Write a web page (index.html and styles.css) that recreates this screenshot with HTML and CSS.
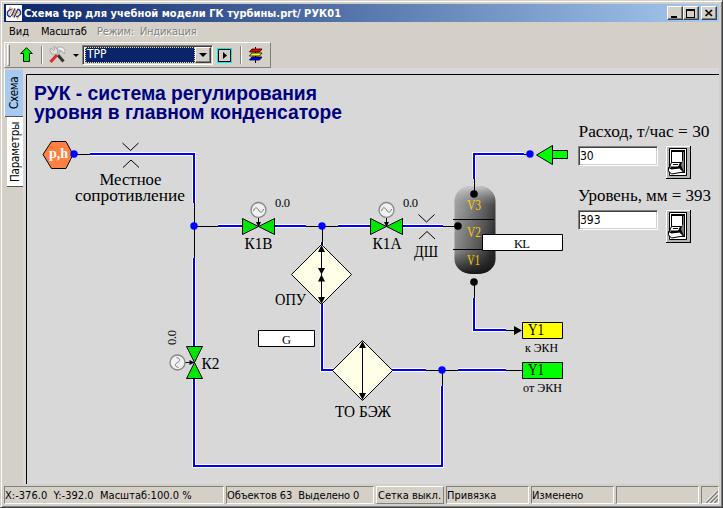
FILE: index.html
```html
<!DOCTYPE html>
<html lang="ru">
<head>
<meta charset="utf-8">
<title>Схема tpp для учебной модели ГК турбины</title>
<link rel="stylesheet" href="styles.css">
</head>
<body>
<div class="window">
  <header class="titlebar">
    <svg class="app-icon" width="16" height="16" viewBox="0 0 16 16"><path fill="#fff" d="M0 0h16v16H0z"/><g fill="none" stroke-width="1.500"><path d="M6 4.500H4L1.500 7v3L3 11.500h2M10 11.500h2L14.500 9V6.500L13 4.500h-2" stroke="#2a3a86"/><path d="M5.500 11 9 3.500M8 12.500 11.500 5" stroke="#2a3a86"/><path d="M3.500 9.500 7 3M6.500 12 10 5M10 9.500 13 7M3 4l2-2M11 14l2-2" stroke="#e8a45c" stroke-width="1.200"/></g></svg>
    <h1 class="title">Схема tpp для учебной модели ГК турбины.prt/ РУК01</h1>
    <div class="controls">
      <button class="ctl"><svg width="13" height="11"><path d="M2 8h6v2H2z"/></svg></button>
      <button class="ctl"><svg width="13" height="11"><path d="M1 1h9v9H1zM2 3v6h7V3z" fill-rule="evenodd"/></svg></button>
      <button class="ctl ctl-close"><svg width="13" height="11"><path d="M2.500 2l6.500 6M9 2L2.500 8" stroke="#000" stroke-width="1.700"/></svg></button>
    </div>
  </header>
  <nav class="menu">
    <span class="m-view">Вид</span><span class="m-scale">Масштаб</span><span class="m-mode">Режим:&nbsp; Индикация</span>
  </nav>
  <div class="toolbar">
    <i class="grip"></i>
    <svg class="t-up" width="14" height="16"><path d="M6.500.7 12.300 6.500H9.500v8h-6v-8H.7z" fill="#00f000" stroke="#000"/></svg>
    <i class="sep"></i>
    <svg class="t-tools" width="18" height="18"><path d="M8 8 14.500 15.500" stroke="#333" stroke-width="3"/><path d="M1 4.500 2 2l2.500 2.500L6 3 4.500 1h2l2 3v3L7 8.500 3 8z" fill="#ddd" stroke="#999" stroke-width=".7"/><path d="m1.500 16 6.500-7" stroke="#e02828" stroke-width="3"/><path d="m8 9 4-4.500" stroke="#bbb" stroke-width="2"/><path d="M8 2c3-2 6-1 8 2l-.5 4-2.500-3-3-1z" fill="#eee" stroke="#999" stroke-width=".7"/></svg>
    <i class="drop"></i>
    <div class="combo"><span class="combo-text">TPP</span><button class="combo-btn"><i class="drop"></i></button></div>
    <button class="play"><svg width="13" height="13"><path d="M.5.5h12v12H.5z" fill="#d4d0c8" stroke="#000"/><path d="M5 3v7l4-3.500z"/></svg></button>
    <i class="sep sep2"></i>
    <svg class="t-layers" width="16" height="16"><path d="M7.500 0v16" stroke="#000"/><g stroke="#000" stroke-width=".8"><path d="M4 2h10l-2.500 3h-10z" fill="#f00"/><path d="M4 6h10l-2.500 3h-10z" fill="#ff0"/><path d="M4 10h10l-2.500 3h-10z" fill="#00f"/></g></svg>
  </div>
  <main class="work">
    <aside class="tabs"><div class="tab active">Схема</div><div class="tab second">Параметры</div></aside>
    <section class="canvas">
      <svg class="scheme" width="696" height="416" viewBox="23 68 696 416">
        <defs>
          <linearGradient id="tank" x1="0" y1="0.1" x2="1" y2="0.65"><stop offset="0" stop-color="#a8a8a8"/><stop offset=".35" stop-color="#808080"/><stop offset=".7" stop-color="#555"/><stop offset="1" stop-color="#262626"/></linearGradient>
          <linearGradient id="shade" x1="0" y1="0" x2="0" y2="1"><stop offset="0" stop-color="#ddd" stop-opacity=".8"/><stop offset=".22" stop-color="#999" stop-opacity="0"/><stop offset=".75" stop-color="#222" stop-opacity="0"/><stop offset="1" stop-color="#111" stop-opacity=".9"/></linearGradient>
          <g id="drive"><circle r="7.500" fill="#f0f0f0" stroke="#888" stroke-width="1.300"/><path d="M-5 1c1-4 3.500-4 5-1s4 3 5-1" fill="none" stroke="#777"/><path d="M0 8v8" stroke="#000"/><path d="M-2.500 12h5L0 17z"/></g>
          <path id="valve" d="M-16-8v16L0 0zM16-8v16L0 0z" fill="#00e600" stroke="#000"/>
          <path id="pinch" d="M-8-12 0-4.500 8-12M-7.500 12.500 .5 5 8.500 12.500" fill="none" stroke="#000"/>
          <path id="pipes" d="M90 154H194V203M194 258V346M218 226H243M275 226H306M338 226H371M403 226H443M322 242V246M322 303V370H333M392 370H426M458 370H506M442 386V466H194V379M474 179V154H524M474 298V330H506" fill="none"/>
        </defs>
        <path d="M719 74.500H26.500V484" fill="none" stroke="#000"/>
        <use href="#pipes" stroke="#fff" stroke-width="4"/>
        <use href="#pipes" stroke="#00f" stroke-width="2"/>
        <path d="M74 154.500H90M194.500 203V258M194 226.500H218M306 226.500H338M322.500 226V245M443 226.500H458M426 370.500H458M442.500 370V386M506 370.500H522M524 154.500H530M474.500 282V298M506 330.500H516" stroke="#000" fill="none"/>
        <path d="M51.500 141.500H66L73 154.500 66 168.500H51.500L43 154.500Z" fill="#ff8040" stroke="#000"/>
        <rect x="454.500" y="186" width="41" height="88" rx="17" ry="15" fill="url(#tank)"/><rect x="454.500" y="186" width="41" height="88" rx="17" ry="15" fill="url(#shade)"/>
        <path d="M453 219.500H494M453 249.500H494M474.500 179V194" stroke="#000"/>
        <g fill="#00f"><circle cx="74" cy="154" r="3.700"/><circle cx="194" cy="226" r="3.700"/><circle cx="322" cy="226" r="3.700"/><circle cx="442" cy="370" r="3.700"/><circle cx="530" cy="154" r="3.700"/></g>
        <circle cx="474" cy="194" r="3.800"/><circle cx="458" cy="226" r="3.800"/><circle cx="474" cy="282" r="3.800"/>
        <use href="#pinch" x="130.500" y="155"/><use href="#pinch" x="426.500" y="226.500"/>
        <use href="#valve" x="258.500" y="226.500"/><use href="#drive" x="258.500" y="210"/>
        <use href="#valve" x="386.500" y="226.500"/><use href="#drive" x="386.500" y="210"/>
        <g transform="translate(194.500 362.500) rotate(-90)"><use href="#valve"/><use href="#drive" y="-17"/></g>
        <g fill="#ffffe8" stroke="#000"><path d="M291.500 274.500l30-30 30 30-30 30zM332.500 370.500l30-30 30 30-30 30z"/></g>
        <path d="M321.500 246v57M362.500 342v57" stroke="#000"/>
        <path d="M321.500 245l3.500 7h-7zM321.500 274.500l3.500-6.500h-7zM321.500 274.500l3.500 7h-7zM321.500 304l3.500-7h-7zM362.500 341l3.500 7h-7zM362.500 400l3.500-7h-7zM522 330.500l-8-4.500v9z"/>
        <g stroke="#000"><path d="M536.500 155 552.500 145.500v19zM552.500 150.500h15v8h-15z" fill="#0f0"/><path d="M482.500 234.500h80v16h-80zM258.500 330.500h56v16h-56z" fill="#fff"/><path d="M522.500 322.500h40v16h-40z" fill="#ff0"/><path d="M522.500 362.500h40v16h-40z" fill="#0f0"/></g>
        <g class="heading"><text x="34" y="100" textLength="283" lengthAdjust="spacingAndGlyphs">РУК - система регулирования</text><text x="34" y="119" textLength="308" lengthAdjust="spacingAndGlyphs">уровня в главном конденсаторе</text></g>
        <text class="ph" x="49" y="158" textLength="19" lengthAdjust="spacingAndGlyphs">p,h</text>
        <g class="label">
          <text x="99.500" y="185" textLength="62" lengthAdjust="spacingAndGlyphs">Местное</text><text x="75" y="201" textLength="110" lengthAdjust="spacingAndGlyphs">сопротивление</text>
          <text x="244.500" y="249" textLength="28" lengthAdjust="spacingAndGlyphs">К1В</text><text x="372.500" y="249" textLength="29" lengthAdjust="spacingAndGlyphs">К1А</text>
          <text x="414" y="257" textLength="24" lengthAdjust="spacingAndGlyphs">ДШ</text><text x="275" y="305" textLength="31" lengthAdjust="spacingAndGlyphs">ОПУ</text>
          <text x="201.500" y="369" textLength="18" lengthAdjust="spacingAndGlyphs">К2</text><text x="335" y="417" textLength="56" lengthAdjust="spacingAndGlyphs">ТО БЭЖ</text>
          <text x="578.500" y="137" textLength="131" lengthAdjust="spacingAndGlyphs">Расход, т/час = 30</text><text x="578" y="201" textLength="133" lengthAdjust="spacingAndGlyphs">Уровень, мм = 393</text>
          <text x="528" y="335" textLength="16" lengthAdjust="spacingAndGlyphs">Y1</text><text x="528" y="375" textLength="16" lengthAdjust="spacingAndGlyphs">Y1</text>
        </g>
        <g class="small"><text x="275" y="207" textLength="15">0.0</text><text x="403" y="207" textLength="15">0.0</text><text transform="translate(176 345) rotate(-90)" textLength="15">0.0</text>
          <text x="525" y="352" textLength="33" lengthAdjust="spacingAndGlyphs">к ЭКН</text><text x="523" y="392" textLength="39" lengthAdjust="spacingAndGlyphs">от ЭКН</text>
          <text x="514" y="248" textLength="16">KL</text><text x="282" y="344">G</text></g>
        <g class="volume"><text x="467" y="210" textLength="14" lengthAdjust="spacingAndGlyphs">V3</text><text x="467" y="237" textLength="14" lengthAdjust="spacingAndGlyphs">V2</text><text x="467" y="265" textLength="13" lengthAdjust="spacingAndGlyphs">V1</text></g>
        <defs><g id="door"><path d="M0 0h25v33H0z"/><path d="M0 0h24v32H0z" fill="#fff"/><path d="M1 1h23v31H1z" fill="#b0b4b4"/><path d="M3.500 2.500h17v27h-17z" fill="#fff" stroke="#000"/><path d="M5 4h14v23H5z"/><path d="M6 6h10v10H6z" fill="#fff"/><path d="M17 6v8l-2 5 3 7V6z" fill="#808080"/><path d="M5.500 16.500h9l-2 4.500H3.500zM2.500 21.500l3 1.500 8-1 4 4-12 2-3-3z" fill="#fff" stroke="#000"/><path d="M7 18.500h5" stroke="#000"/></g></defs>
        <use href="#door" x="666" y="146"/><use href="#door" x="666" y="210"/>
      </svg>
      <input class="field flow" value="30"><input class="field level" value="393">
    </section>
  </main>
  <footer class="status">
    <div class="cell c1">X:-376.0&nbsp; Y:-392.0&nbsp; Масштаб:100.0 %</div><div class="cell c2">Объектов 63&nbsp; Выделено 0</div><div class="cell c3 raised">Сетка выкл.</div><div class="cell c4">Привязка</div><div class="cell c5">Изменено</div><div class="cell c6"></div>
    <div class="cell c7"><svg width="12" height="12"><path d="M0 12 12 0M4 12l8-8M8 12l4-4" stroke="#808080" stroke-width="1.800"/><path d="M-1.500 12 12-1.500M2.500 12 12 2.500M6.500 12 12 6.500" stroke="#fff"/></svg></div>
  </footer>
</div>
</body>
</html>
```
FILE: styles.css
```css
* { box-sizing: border-box; }
body { margin: 0; overflow: hidden; }
button { padding: 0; border: 0; background: none; display: block; }
svg { display: block; }
.window { width: 723px; height: 508px; display: flex; flex-direction: column; padding: 3px; background: #d4d0c8; border: 1px solid; border-color: #d4d0c8 #404040 #404040 #d4d0c8; box-shadow: inset 1px 1px #fff, inset -1px -1px #808080; font: 11px "DejaVu Sans Condensed", "DejaVu Sans", sans-serif; color: #000; }
.titlebar { height: 18px; flex: none; display: flex; align-items: center; padding: 0 2px; background: linear-gradient(90deg, #0a246a, #a6caf0); }
.title { flex: 1; margin: 0 0 0 2px; font: bold 11px "DejaVu Sans Condensed", sans-serif; letter-spacing: .04px; color: #fff; white-space: nowrap; }
.controls { display: flex; }
.ctl { width: 16px; height: 14px; background: #d4d0c8; border: 1px solid; border-color: #fff #404040 #404040 #fff; box-shadow: inset -1px -1px #808080; overflow: hidden; }
.ctl svg { margin-left: 1px; }
.ctl-close { margin-left: 2px; }
.menu { height: 20px; flex: none; display: flex; align-items: center; padding: 0 0 2px 5px; white-space: pre; }
.m-view { width: 32px; }
.m-scale { width: 56px; letter-spacing: -.2px; }
.m-mode { color: #808080; text-shadow: 1px 1px #fff; letter-spacing: -.2px; }
.toolbar { width: 267px; height: 26px; flex: none; display: flex; align-items: center; border: 1px solid; border-color: #fff #808080 #808080 #fff; }
.grip { width: 3px; height: 22px; margin-left: 2px; border: 1px solid; border-color: #fff #808080 #808080 #fff; }
.t-up { margin-left: 10px; }
.sep { width: 2px; height: 18px; margin-left: 7px; background: #808080; border-right: 1px solid #fff; }
.t-tools { margin-left: 6px; }
.drop { width: 0; height: 0; border: 3px solid transparent; border-top-color: #000; border-bottom: 0; margin-left: 6px; }
.combo { width: 131px; height: 20px; margin-left: 3px; padding: 1px; display: flex; background: #fff; border: 1px solid; border-color: #808080 #fff #fff #808080; box-shadow: inset 1px 1px #404040, inset -1px -1px #d4d0c8; }
.combo-text { width: 112px; height: 16px; margin: 0 0 0 1px; background: #0a246a; color: #fff; outline: 1px dotted #f5db95; outline-offset: -1px; padding-left: 2px; font-size: 12px; line-height: 15px; }
.combo-btn { width: 16px; height: 16px; background: #d4d0c8; border: 1px solid; border-color: #fff #404040 #404040 #fff; box-shadow: inset -1px -1px #808080; }
.combo-btn .drop { display: block; margin: 0 0 0 3px; border-width: 4px 4px 0; }
.play { margin-left: 4px; border: 1px solid #00e8f0; }
.sep2 { margin-left: 8px; }
.t-layers { margin-left: 6px; }
.work { height: 416px; flex: none; display: flex; }
.tabs { width: 19px; flex: none; padding: 1px 0 0 1px; }
.tab { display: flex; align-items: center; justify-content: center; writing-mode: vertical-rl; transform: rotate(180deg); width: 18px; font-size: 11.500px; }
.active { height: 48px; background: #a6caf0; border-bottom: 1px solid #d4d0c8; border-top: 1px solid #555; box-shadow: 1px 0 #fff; letter-spacing: -.3px; }
.second { width: 16px; height: 70px; margin-left: 2px; background: #fff; border-top: 1px solid #555; letter-spacing: -.2px; }
.canvas { position: relative; width: 696px; background: #d8d8d8; }
.scheme text { fill: #000; }
.heading { font: bold 20px "Liberation Sans", sans-serif; }
.scheme .heading text { fill: #000080; }
.label { font: 16px "Liberation Serif", serif; }
.small { font: 12.500px "Liberation Serif", serif; }
.scheme .ph { font: bold 15px "Liberation Serif", serif; fill: #fff; }
.volume { font: 15px "Liberation Serif", serif; }
.scheme .volume text { fill: #ffc800; }
.field { position: absolute; left: 555px; width: 80px; height: 20px; padding: 0 1px 1px; border: 1px solid; border-color: #808080 #fff #fff #808080; box-shadow: inset 1px 1px #404040, inset -1px -1px #d4d0c8; border-radius: 0; outline: 0; font: 12px "DejaVu Sans Condensed", sans-serif; background: #fff; color: #000; }
.flow { top: 78px; }
.level { top: 142px; }
.status { height: 20px; flex: none; display: flex; gap: 2px; padding-top: 2px; }
.cell { height: 18px; border: 1px solid; border-color: #808080 #fff #fff #808080; line-height: 17px; padding-left: 0; white-space: nowrap; overflow: hidden; }
.raised { border-color: #fff #808080 #808080 #fff; padding-left: 1px; }
.c1 { width: 220px; letter-spacing: .03px; }
.c2 { width: 148px; letter-spacing: -.1px; }
.c3 { width: 68px; }
.c4, .c5, .c6 { width: 83px; }
.c7 { width: 18px; padding: 4px 0 0 4px; }
```
